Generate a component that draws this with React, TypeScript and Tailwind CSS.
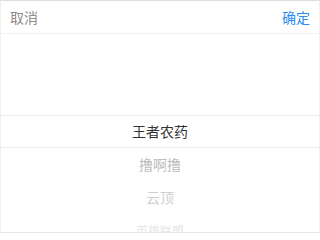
import React from "react"

const items = [
  { name: "王者农药", cls: "text-[#333333] text-[14px]" },
  { name: "撸啊撸", cls: "text-[#bdbdbd] text-[14px]" },
  { name: "云顶", cls: "text-[#cfcfcf] text-[14px]" },
  { name: "英雄联盟", cls: "text-[#e4e4e4] text-[12px]" }
]

export default function App() {
  return (
    <div
      className="w-[320px] h-[233px] overflow-hidden bg-white border-t border-t-[#dcdcdc] border-x border-x-[#efefef] border-b border-b-[#e6e6e6] flex flex-col"
      style={{ fontFamily: '"Noto Sans CJK SC", "Noto Sans", sans-serif' }}
    >
      {/* Header */}
      <div className="h-[33px] shrink-0 flex items-center justify-between px-[9px] border-b border-[#f1f1f1]">
        <button className="text-[14px] leading-none text-[#8a8a8a]">取消</button>
        <button className="text-[14px] leading-none text-[#2a8cf0]">确定</button>
      </div>

      {/* Picker */}
      <div className="flex-1 flex flex-col overflow-hidden">
        <div className="h-[81px] shrink-0" />
        <ul className="flex flex-col">
          {items.map((item, i) => (
            <li
              key={item.name}
              className={`h-[33px] shrink-0 flex items-center justify-center ${item.cls} ${
                i === 0 ? "border-y border-[#ececec]" : ""
              }`}
            >
              {item.name}
            </li>
          ))}
        </ul>
      </div>
    </div>
  )
}
